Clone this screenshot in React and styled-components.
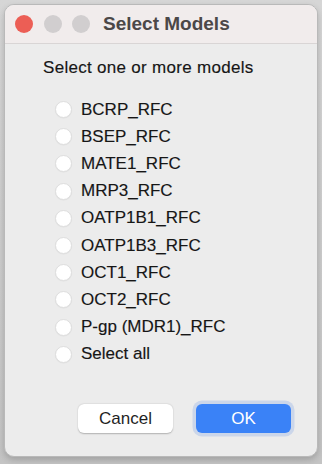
import React, { useState } from "react";
import styled, { createGlobalStyle } from "styled-components";

const GlobalStyle = createGlobalStyle`
  html, body {
    margin: 0;
    padding: 0;
    background: #cbcbcb;
  }
  body {
    font-family: "Liberation Sans", Arial, sans-serif;
  }
`;

const Screen = styled.div`
  width: 322px;
  height: 464px;
  padding: 4px;
  box-sizing: border-box;
  background: linear-gradient(#d6d6d6, #c4c4c4);
`;

const Window = styled.div`
  width: 314px;
  height: 453px;
  display: flex;
  flex-direction: column;
  background: #ececec;
  border-radius: 10px;
  border: 1px solid #b9b9b9;
  box-sizing: border-box;
  box-shadow: 0 3px 6px rgba(0, 0, 0, 0.18);
  overflow: hidden;
`;

const TitleBar = styled.div`
  height: 39px;
  flex-shrink: 0;
  display: flex;
  align-items: center;
  padding-left: 10px;
  background: #f1ecec;
  border-bottom: 1px solid #d9d5d5;
  box-sizing: border-box;
`;

const Lights = styled.div`
  display: flex;
  gap: 10.5px;
`;

const Light = styled.span`
  width: 18px;
  height: 18px;
  border-radius: 50%;
  background: ${p => p.$color};
`;

const Title = styled.div`
  margin-left: 13px;
  font-size: 19px;
  font-weight: bold;
  color: #4b4848;
`;

const Body = styled.div`
  flex: 1;
  display: flex;
  flex-direction: column;
  padding: 14px 26px 23px 38px;
`;

const Prompt = styled.div`
  font-size: 17px;
  line-height: 20px;
  letter-spacing: 0.3px;
  color: #161616;
  -webkit-text-stroke: 0.15px #161616;
`;

const List = styled.div`
  margin: 18px 0 0 12px;
  display: flex;
  flex-direction: column;
`;

const Row = styled.label`
  height: 27.2px;
  display: flex;
  align-items: center;
  gap: 9px;
  font-size: 17px;
  color: #161616;
  -webkit-text-stroke: 0.15px #161616;
  cursor: pointer;
`;

const Radio = styled.span`
  width: 17px;
  height: 17px;
  border-radius: 50%;
  box-sizing: border-box;
  background: ${p => (p.$on ? "#3478f6" : "#ffffff")};
  border: 1px solid ${p => (p.$on ? "#2a6ae0" : "#dedede")};
  box-shadow: 0 0.5px 1px rgba(0, 0, 0, 0.06);
  display: flex;
  align-items: center;
  justify-content: center;
  &::after {
    content: "";
    width: 6px;
    height: 6px;
    border-radius: 50%;
    background: #fff;
    display: ${p => (p.$on ? "block" : "none")};
  }
`;

const Buttons = styled.div`
  margin-top: auto;
  display: flex;
  justify-content: flex-end;
  gap: 23px;
`;

const Button = styled.button`
  width: 95px;
  height: 29px;
  border-radius: 6px;
  font-family: "Liberation Sans", Arial, sans-serif;
  font-size: 17px;
  border: none;
  padding: 0;
  color: ${p => (p.$primary ? "#ffffff" : "#1f1f1f")};
  background: ${p => (p.$primary ? "#3a82f7" : "#ffffff")};
  box-shadow: ${p =>
    p.$primary
      ? "0 0 0 3.5px #cbd6ea"
      : "0 0.5px 1.5px rgba(0, 0, 0, 0.25)"};
  cursor: pointer;
`;

const models = [
  "BCRP_RFC",
  "BSEP_RFC",
  "MATE1_RFC",
  "MRP3_RFC",
  "OATP1B1_RFC",
  "OATP1B3_RFC",
  "OCT1_RFC",
  "OCT2_RFC",
  "P-gp (MDR1)_RFC",
  "Select all"
];

export default function App() {
  const [picked, setPicked] = useState({});

  const toggle = name => {
    setPicked({ ...picked, [name]: !picked[name] });
  };

  return (
    <Screen>
      <GlobalStyle />
      <Window>
        <TitleBar>
          <Lights>
            <Light $color="#ec5e55" />
            <Light $color="#d1cecf" />
            <Light $color="#d1cecf" />
          </Lights>
          <Title>Select Models</Title>
        </TitleBar>
        <Body>
          <Prompt>Select one or more models</Prompt>
          <List>
            {models.map(m => (
              <Row key={m} onClick={() => toggle(m)}>
                <Radio $on={picked[m]} />
                {m}
              </Row>
            ))}
          </List>
          <Buttons>
            <Button>Cancel</Button>
            <Button $primary>OK</Button>
          </Buttons>
        </Body>
      </Window>
    </Screen>
  );
}
